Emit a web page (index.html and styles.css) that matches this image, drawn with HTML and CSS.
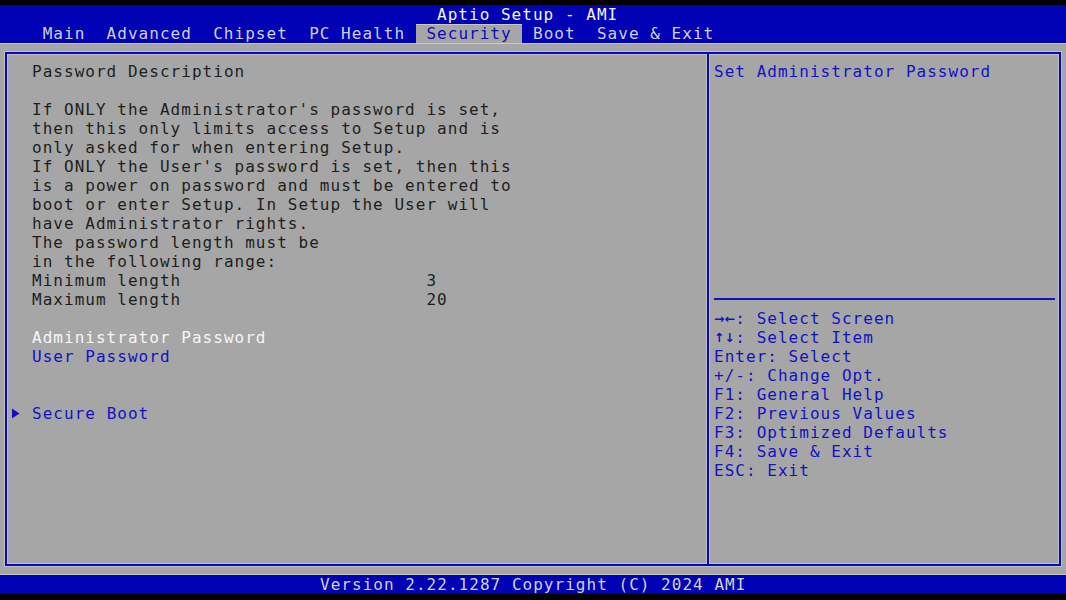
FILE: index.html
```html
<!DOCTYPE html>
<html>
<head>
<meta charset="utf-8">
<title>Aptio Setup - AMI</title>
<link rel="stylesheet" href="styles.css">
</head>
<body>
<div class="screen">
  <header class="title">Aptio Setup - AMI</header>
  <nav class="tabs">
    <span class="tab">Main</span><span class="tab">Advanced</span><span class="tab">Chipset</span><span class="tab">PC Health</span><span class="tab active">Security</span><span class="tab">Boot</span><span class="tab">Save &amp; Exit</span>
  </nav>
  <main class="main">
    <div class="frame">
      <section class="left">
        <div class="line">Password Description</div>
        <div class="line"></div>
        <div class="line">If ONLY the Administrator's password is set,</div>
        <div class="line">then this only limits access to Setup and is</div>
        <div class="line">only asked for when entering Setup.</div>
        <div class="line">If ONLY the User's password is set, then this</div>
        <div class="line">is a power on password and must be entered to</div>
        <div class="line">boot or enter Setup. In Setup the User will</div>
        <div class="line">have Administrator rights.</div>
        <div class="line">The password length must be</div>
        <div class="line">in the following range:</div>
        <div class="line kv"><span class="label">Minimum length</span><span class="value">3</span></div>
        <div class="line kv"><span class="label">Maximum length</span><span class="value">20</span></div>
        <div class="line"></div>
        <div class="line item selected">Administrator Password</div>
        <div class="line item">User Password</div>
        <div class="line"></div>
        <div class="line"></div>
        <div class="line item sub"><span class="arrow"><svg width="9" height="11" viewBox="0 0 9 11"><polygon points="1,0.5 8.5,5.5 1,10.5" fill="#1010c0"/></svg></span>Secure Boot</div>
      </section>
      <aside class="right">
        <div class="help"><div class="line">Set Administrator Password</div></div>
        <div class="sep"></div>
        <div class="keys">
          <div class="line"><span class="glyph">→←</span>: Select Screen</div>
          <div class="line"><span class="glyph">↑↓</span>: Select Item</div>
          <div class="line">Enter: Select</div>
          <div class="line">+/-: Change Opt.</div>
          <div class="line">F1: General Help</div>
          <div class="line">F2: Previous Values</div>
          <div class="line">F3: Optimized Defaults</div>
          <div class="line">F4: Save &amp; Exit</div>
          <div class="line">ESC: Exit</div>
        </div>
      </aside>
    </div>
  </main>
  <footer class="footer">Version 2.22.1287 Copyright (C) 2024 AMI</footer>
</div>
</body>
</html>
```

FILE: styles.css
```css
html, body {
  margin: 0;
  padding: 0;
  background: #000;
}

.screen {
  width: 1066px;
  height: 600px;
  padding-top: 5px;
  box-sizing: border-box;
  background: #000;
  font-family: "DejaVu Sans Mono", "Liberation Mono", monospace;
  font-size: 16px;
  letter-spacing: 1.027px;
  line-height: 19px;
  overflow: hidden;
}

.title {
  height: 19px;
  background: #0000b4;
  color: #f4f4f4;
  padding-left: 437px;
  white-space: pre;
}

.tabs {
  height: 19px;
  background: #0000b4;
  padding-left: 32px;
  display: flex;
  white-space: pre;
}

.tab {
  padding: 0 10.66px;
  color: #cfcfe0;
  height: 19px;
}

.tab.active {
  background: #a6a6a6;
  color: #0c0cbc;
  box-shadow: inset 0 1px 0 #c8c8c8;
}

.main {
  height: 532px;
  background: #a6a6a6;
  padding: 9px 5px;
  box-sizing: border-box;
  box-shadow: inset 0 1px 0 #c8c8c8, inset 0 -1px 0 #c8c8c8;
}

.frame {
  height: 514px;
  box-sizing: border-box;
  border: 2px solid #0808c0;
  box-shadow: 0 0 0 1px #c2c2c2, inset 0 0 0 1px #c2c2c2;
  display: flex;
}

.left {
  width: 702px;
  flex: none;
  box-sizing: border-box;
  border-right: 2px solid #0808c0;
  box-shadow: 1px 0 0 #c2c2c2, inset -1px 0 0 #c2c2c2;
  padding: 8px 0 0 25px;
  color: #1e1e1e;
}

.line {
  height: 19px;
  line-height: 19px;
  white-space: pre;
}

.kv {
  display: flex;
}

.label {
  width: 394.4px;
  flex: none;
}

.item {
  color: #1212c4;
}

.item.selected {
  color: #f6f6f6;
}

.sub {
  margin-left: -21.3px;
  display: flex;
  align-items: center;
}

.arrow {
  width: 21.32px;
  height: 19px;
  flex: none;
  display: flex;
  align-items: center;
  box-sizing: border-box;
}

.arrow svg {
  display: block;
}

.right {
  flex: 1;
  padding: 8px 4px 0 5px;
  color: #1212c4;
}

.help {
  height: 228px;
}

.sep {
  height: 19px;
  box-sizing: border-box;
  padding-top: 8px;
}

.sep::before {
  content: "";
  display: block;
  height: 2px;
  background: #1212c4;
}

.glyph {
  display: inline-block;
  width: 21.32px;
  letter-spacing: 0;
  font-family: "DejaVu Sans", sans-serif;
  font-weight: bold;
  font-size: 12.5px;
  white-space: nowrap;
  vertical-align: top;
}

.footer {
  height: 19px;
  background: #0000b4;
  color: #d2d2d2;
  padding-left: 320px;
  white-space: pre;
}
```
